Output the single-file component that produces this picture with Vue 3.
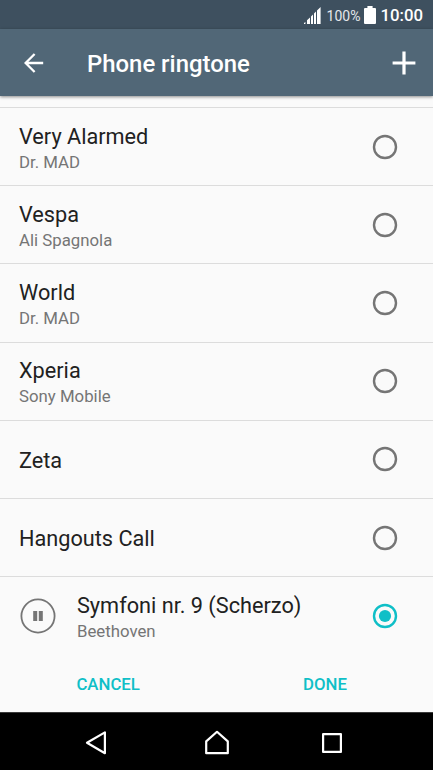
<template>
  <div class="screen">
    <div class="status-bar">
      <svg class="signal" width="17" height="17" viewBox="0 0 17 17">
        <path d="M0 17v-1L1.4 15v2zM3 17v-3.8L6 10.4V17zM7 17v-7.4L9 7.6V17zM10 17V6.6L12 4.6V17zM13 17V3.4L16.6 0v17z" />
      </svg>
      <span class="percent">100%</span>
      <svg class="battery" width="12" height="18" viewBox="0 0 12 18">
        <path d="M3.4 0h5.2v2H11a1 1 0 0 1 1 1v14a1 1 0 0 1-1 1H1a1 1 0 0 1-1-1V3a1 1 0 0 1 1-1h2.4z" />
      </svg>
      <span class="clock">10:00</span>
    </div>

    <header class="toolbar">
      <button class="icon-btn back" aria-label="Back">
        <svg width="20" height="20" viewBox="0 0 20 20">
          <path d="M19.2 10H1.6M10.6 1l-9 9 9 9" />
        </svg>
      </button>
      <h1>Phone ringtone</h1>
      <button class="icon-btn add" aria-label="Add">
        <svg width="24" height="24" viewBox="0 0 24 24">
          <path d="M12 .6v22.8M.6 12h22.8" />
        </svg>
      </button>
    </header>

    <main class="list">
      <div
        v-for="tone in tones"
        :key="tone.name"
        class="row"
        @click="selected = tone.name"
      >
        <svg v-if="tone.name === selected" class="pause" width="36" height="36" viewBox="0 0 36 36">
          <circle cx="18" cy="18" r="16.6" />
          <path d="M13.2 13h4v10h-4zM18.8 13h4v10h-4z" />
        </svg>
        <div class="text">
          <div class="name">{{ tone.name }}</div>
          <div v-if="tone.artist" class="artist">{{ tone.artist }}</div>
        </div>
        <svg class="radio" :class="{ checked: tone.name === selected }" width="26" height="26" viewBox="0 0 26 26">
          <circle class="ring" cx="13" cy="13" r="11" />
          <circle v-if="tone.name === selected" class="dot" cx="13" cy="13" r="6.1" />
        </svg>
      </div>
    </main>

    <div class="actions">
      <button class="cancel">CANCEL</button>
      <button class="done">DONE</button>
    </div>

    <nav class="nav-bar">
      <svg width="24" height="26" viewBox="0 0 24 26">
        <path d="M20.9 2.4v20.8L3 12.8z" />
      </svg>
      <svg class="home" width="26" height="26" viewBox="0 0 26 26">
        <path d="M2.2 23.2V11.4L13 1.8l10.8 9.6v11.8z" />
      </svg>
      <svg width="22" height="22" viewBox="0 0 22 22">
        <path d="M2.1 2.1h17.8v17.8H2.1z" />
      </svg>
    </nav>
  </div>
</template>

<script setup>
import { ref } from 'vue';

const tones = [
  { name: 'Very Alarmed', artist: 'Dr. MAD' },
  { name: 'Vespa', artist: 'Ali Spagnola' },
  { name: 'World', artist: 'Dr. MAD' },
  { name: 'Xperia', artist: 'Sony Mobile' },
  { name: 'Zeta' },
  { name: 'Hangouts Call' },
  { name: 'Symfoni nr. 9 (Scherzo)', artist: 'Beethoven' },
];

const selected = ref('Symfoni nr. 9 (Scherzo)');
</script>

<style>
body {
  margin: 0;
}
</style>

<style scoped>
.screen {
  display: flex;
  flex-direction: column;
  height: 770px;
  overflow: hidden;
  background: #fafafa;
  font-family: Roboto, sans-serif;
}

button {
  padding: 0;
  border: none;
  background: none;
  font-family: inherit;
  cursor: pointer;
}

svg {
  display: block;
  flex: none;
}

.status-bar {
  display: flex;
  align-items: center;
  justify-content: flex-end;
  flex: none;
  height: 29px;
  padding-right: 10px;
  box-sizing: border-box;
  background: #3e505f;
  color: #fff;
}

.status-bar svg {
  fill: #fff;
}

.signal {
  margin: 2px 6px 0 0;
}

.percent {
  margin: 2px 4px 0 0;
  color: #e4e8eb;
  font-size: 14px;
}

.battery {
  margin-right: 4px;
}

.clock {
  margin-top: 1px;
  font-size: 16.8px;
  font-weight: 500;
}

.toolbar {
  display: flex;
  align-items: center;
  flex: none;
  height: 67px;
  padding: 0 17px 0 24px;
  box-sizing: border-box;
  background: #516777;
  box-shadow: 0 1px 3px #00000070;
}

.toolbar h1 {
  flex: 1;
  margin: 3px 0 0 43px;
  color: #fff;
  font-size: 23.9px;
  font-weight: 500;
}

.icon-btn path {
  fill: none;
  stroke: #fff;
  stroke-width: 2.3;
}

.icon-btn.add path {
  stroke-width: 3.2;
}

.list {
  flex: none;
  margin-top: 11px;
}

.row {
  display: flex;
  align-items: center;
  height: 78.2px;
  padding: 0 35px 0 19px;
  box-sizing: border-box;
  border-top: 1px solid #dcdcdc;
  cursor: pointer;
}

.pause {
  margin: 0 20.6px 0 1.4px;
  fill: #757575;
}

.pause circle {
  fill: none;
  stroke: #757575;
  stroke-width: 1.8;
}

.text {
  flex: 1;
  padding-top: 3.2px;
}

.name {
  color: #212121;
  font-size: 21.7px;
  line-height: 28px;
}

.artist {
  color: #757575;
  font-size: 16.8px;
  line-height: 23px;
}

.radio {
  fill: none;
  stroke: #757575;
  stroke-width: 2.4;
}

.radio.checked {
  stroke: #0fbfc7;
}

.dot {
  fill: #0fbfc7;
  stroke: none;
}

.actions {
  display: flex;
  align-items: center;
  justify-content: space-between;
  flex: 1;
  padding: 2px 86px 0 76.4px;
}

.actions button {
  color: #0fbfc7;
  font-size: 16.8px;
  font-weight: 500;
}

.nav-bar {
  display: flex;
  align-items: center;
  justify-content: space-between;
  flex: none;
  height: 58px;
  padding: 3px 90px 0 84px;
  box-sizing: border-box;
  border-top: 1px solid #3a3a3a;
  background: #000;
}

.nav-bar path {
  fill: none;
  stroke: #fff;
  stroke-width: 2.2;
  stroke-linejoin: round;
}

.home {
  margin-left: 4px;
}
</style>
